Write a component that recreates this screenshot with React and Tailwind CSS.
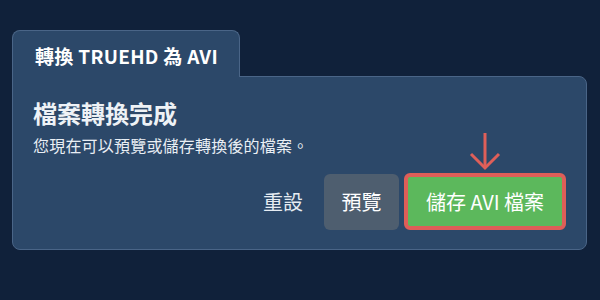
export default function App() {
  return (
    <div
      className="w-[600px] h-[300px] bg-[#10213a] pt-[30px] pl-[12px]"
      style={{ fontFamily: '"Noto Sans CJK TC", "Noto Sans", sans-serif' }}
    >
      <div className="w-[575px]">
        <div className="relative z-10 -mb-px w-[228px] h-[47px] bg-[#2c4869] border border-b-0 border-[#4a6587] rounded-t-lg flex items-center pl-[22px] pt-[2px]">
          <span className="text-[19px] font-bold text-white leading-none tracking-[0.3px]">轉換 TRUEHD 為 AVI</span>
        </div>
        <div className="bg-[#2c4869] border border-[#4a6587] rounded-b-lg rounded-tr-lg px-5 pt-[21px] pb-[19px]">
          <h1 className="text-[24px] leading-[29px] font-bold text-[#eef2f6]">檔案轉換完成</h1>
          <p className="mt-[7px] text-[16px] leading-[22px] text-[#e9eef4] tracking-[0.2px]">您現在可以預覽或儲存轉換後的檔案。</p>
          <div className="mt-[18px] flex items-center justify-end">
            <span className="text-[20px] leading-none text-[#e6ecf2] mr-[21px]">重設</span>
            <button className="h-[56px] w-[75px] rounded-md bg-[#4e5e6f] text-[20px] text-white">預覽</button>
            <div className="relative ml-[5px]">
              <svg
                className="absolute left-1/2 -translate-x-1/2 bottom-full mb-[3px]"
                width="32"
                height="38"
                viewBox="0 0 32 38"
                fill="none"
                stroke="#df5f59"
                strokeWidth="3"
                strokeLinecap="butt"
              >
                <path d="M16 0 V35" />
                <path d="M2 21 L16 35 L30 21" />
              </svg>
              <button className="h-[57px] w-[162px] -mt-px rounded-md border-4 border-[#de5e58] bg-[#5cb85c] text-[20px] text-white">
                儲存 AVI 檔案
              </button>
            </div>
          </div>
        </div>
      </div>
    </div>
  );
}
